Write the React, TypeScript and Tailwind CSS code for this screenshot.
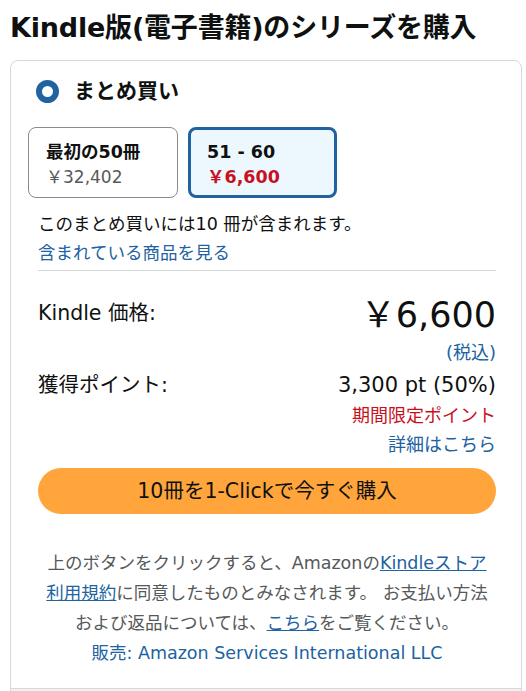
import React from 'react';

const font = { fontFamily: '"DejaVu Sans", "Noto Sans CJK JP", sans-serif' };

export default function App() {
  return (
    <div className="w-[526px] h-[691px] bg-white overflow-hidden text-[#0f1111]" style={font}>
      <h1 className="pl-[10px] pt-[12px] text-[27px] font-bold leading-[32px] tracking-[-0.2px] whitespace-nowrap">
        Kindle版(電子書籍)のシリーズを購入
      </h1>

      <div className="ml-[10px] mr-[4px] mt-[16px] border border-[#d5d9d9] rounded-t-[8px] bg-white">
        {/* radio header */}
        <div className="flex items-center gap-[15px] pl-[25px] pt-[17px]">
          <div className="w-[23px] h-[23px] rounded-full border-[6px] border-[#2162a1] bg-white" />
          <span className="text-[21px] font-bold leading-[26px]">まとめ買い</span>
        </div>

        <div className="px-[27px]">
          {/* option tiles */}
          <div className="flex gap-[10px] mt-[23px] -ml-[10px]">
            <div className="w-[150px] h-[71px] border border-[#888c8c] rounded-[8px] pl-[17px] pt-[12px]">
              <div className="text-[17.5px] font-bold leading-[25px]">最初の50冊</div>
              <div className="text-[17px] leading-[25px] text-[#565959]">￥32,402</div>
            </div>
            <div className="w-[149px] h-[71px] border-[3px] border-[#2162a1] bg-[#edf8fe] rounded-[8px] pl-[16px] pt-[10px]">
              <div className="text-[17.5px] font-bold leading-[25px]">51 - 60</div>
              <div className="text-[17.5px] font-bold leading-[25px] text-[#c7111e]">￥6,600</div>
            </div>
          </div>

          <div className="mt-[12px] text-[17.5px] leading-[28px] whitespace-nowrap">このまとめ買いには10 冊が含まれます。</div>
          <div className="text-[17.5px] leading-[30px] text-[#2162a1]">含まれている商品を見る</div>
          <div className="border-t border-[#d5d9d9] mt-[2px] w-[458px]" />

          {/* price rows */}
          <div className="w-[458px]">
            <div className="flex justify-between items-start mt-[27px]">
              <span className="text-[20.5px] leading-[30px]">Kindle 価格:</span>
              <span className="text-[35px] leading-[44px] -mt-[5px]">￥6,600</span>
            </div>
            <div className="text-right text-[18px] leading-[26px] text-[#2162a1] mt-[3px]">(税込)</div>
            <div className="flex justify-between mt-[4px]">
              <span className="text-[20.5px] leading-[30px]">獲得ポイント:</span>
              <span className="text-[21px] leading-[30px]">3,300 pt (50%)</span>
            </div>
            <div className="text-right text-[18px] leading-[30px] text-[#c7111e] mt-[1px]">期間限定ポイント</div>
            <div className="text-right text-[18px] leading-[28px] text-[#2162a1]">詳細はこちら</div>

            <button className="mt-[9px] w-full h-[46px] rounded-full bg-[#ffa53b] text-[20.5px] leading-[26px] text-[#0f1111]">
              10冊を1-Clickで今すぐ購入
            </button>

            <p className="mt-[34px] text-center text-[17.5px] leading-[30px] text-[#565959] -mx-[3px] whitespace-nowrap">
              上のボタンをクリックすると、Amazonの<span className="text-[#2162a1] underline">Kindleストア</span>
              <br />
              <span className="text-[#2162a1] underline">利用規約</span>に同意したものとみなされます。 お支払い方法
              <br />
              および返品については、<span className="text-[#2162a1] underline">こちら</span>をご覧ください。
            </p>
            <p className="text-center text-[17.5px] leading-[30px] text-[#2162a1] whitespace-nowrap">
              販売: Amazon Services International LLC
            </p>
          </div>
        </div>
        <div className="h-[20px]" />
        <div className="border-t border-[#d5d9d9] bg-[#f0f2f2] h-[20px]" />
      </div>
    </div>
  );
}
